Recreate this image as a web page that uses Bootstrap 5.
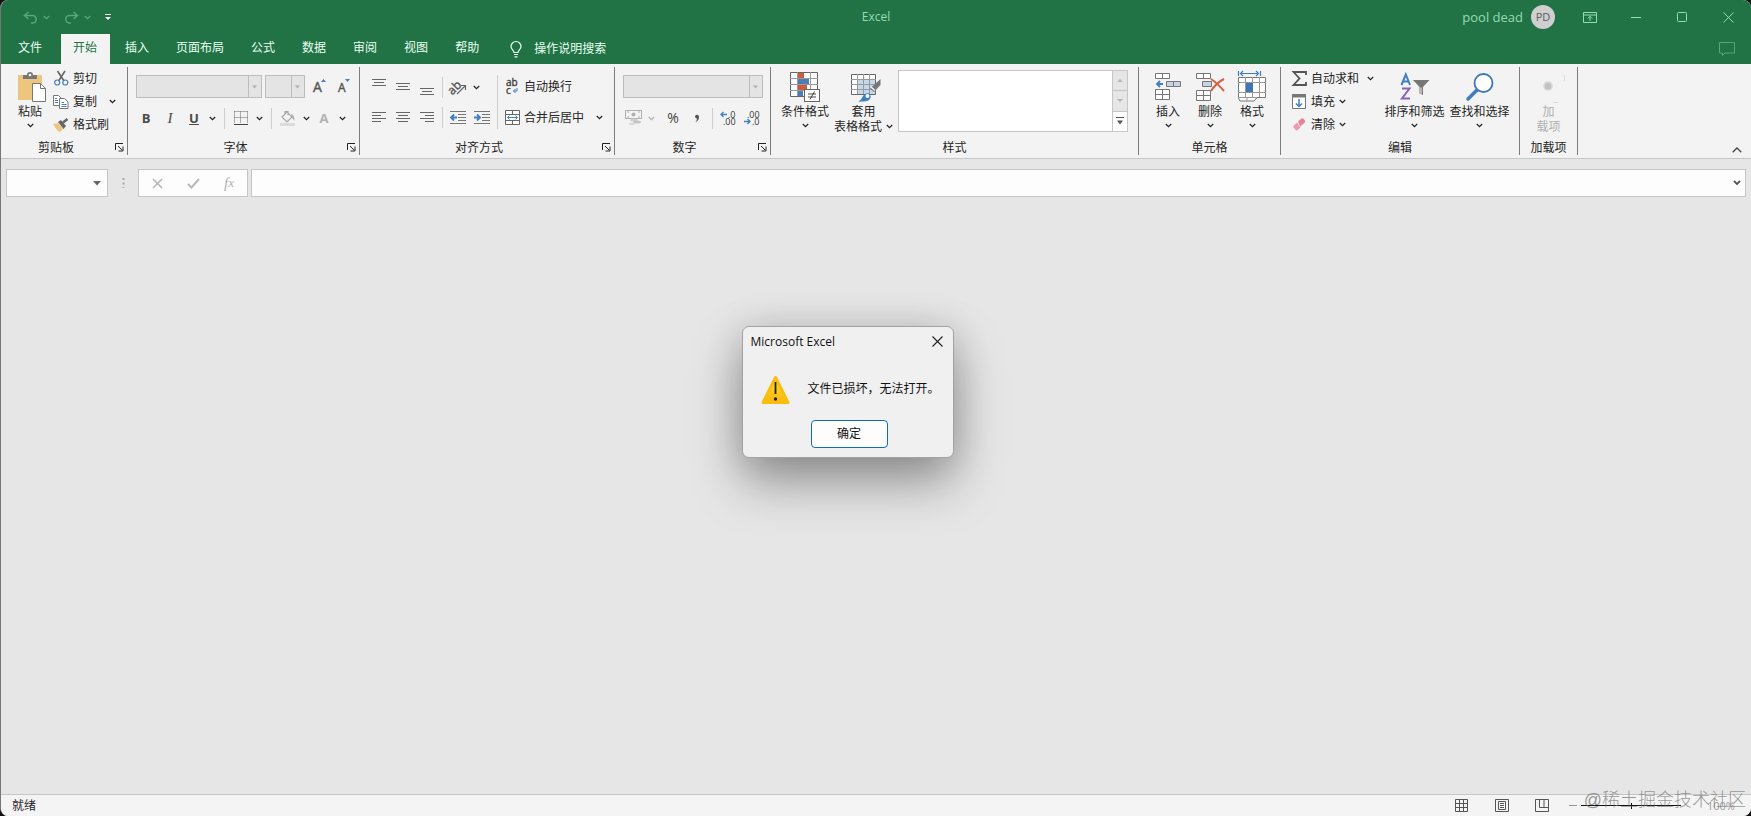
<!DOCTYPE html>
<html lang="zh-CN">
<head>
<meta charset="utf-8">
<meta name="viewport" content="width=device-width, initial-scale=1">
<title>Excel</title>
<link href="https://cdn.jsdelivr.net/npm/bootstrap@5.3.0/dist/css/bootstrap.min.css" rel="stylesheet">
<style>
:root{--xl-green:#217346;--xl-ribbon:#f3f3f3;--xl-sheet:#e6e6e6;--xl-line:#c6c6c6;}
html,body{height:100%;}
body{background:#111;font-family:"Open Sans","Noto Sans CJK SC",sans-serif;font-size:12px;line-height:16px;color:#262626;}
button,select,input{font:inherit;color:inherit;}
svg{display:block;flex:none;fill:none;overflow:visible;}
.app-window{background:var(--xl-sheet);border-left:1px solid #777;border-radius:8px;overflow:hidden;}
/* title bar */
.title-bar{background:var(--xl-green);height:34px;color:#94dcb2;}
.bar-side{flex:1 1 0;}
.plain-btn{border:0;background:none;padding:0;display:flex;align-items:center;justify-content:center;}
.faded{color:#5aa47b;}
.qat-btn{width:26px;}
.user-name{font-size:13px;}
.avatar{width:24px;height:24px;background:#cfcfcf;color:#5c5c5c;font-size:11px;margin-right:12px;}
.win-btn{width:46px;height:30px;}
/* tabs */
.tab-bar{background:var(--xl-green);height:30px;padding-left:5px;gap:3px;}
.tab-bar .tab-link{color:#eafff2;padding:6px 12px;text-decoration:none;height:30px;line-height:16px;white-space:nowrap;}
.tab-bar .tab-link.active{background:var(--xl-ribbon);color:var(--xl-green);padding-right:13px;}
/* ribbon */
.ribbon{background:var(--xl-ribbon);padding:3px 0;border-bottom:1px solid var(--xl-line);height:95px;overflow:hidden;}
.rb-group{border-right:1px solid #7d7d7d;flex:none;height:88px;}
.rb-body{height:73px;flex:none;}
.rb-label{height:15px;line-height:15px;flex:none;}
.launcher{width:16px;height:15px;}
.big-btn{flex-direction:column;justify-content:flex-start;padding-top:2px;line-height:15px;white-space:nowrap;}
.big-btn .ico{height:35px;display:flex;align-items:center;}
.big-btn .chev{margin-top:4px;}
.bw-s{width:42px}.bw-m{width:52px}.bw-l{width:65px}
.paste-btn{padding-left:6px;}
.row-btn{height:23px;gap:4px;white-space:nowrap;justify-content:flex-start;}
.row-btn .ico{width:16px;display:flex;justify-content:center;}
.sq{width:24px;height:24px;flex:none;}
.dd{width:12px;height:24px;flex:none;}
.sep{width:1px;height:21px;background:#cdcdcd;margin:0 4px 0 6px;flex:none;}
.sep-tight{margin:0 3px;}
.sep-long{height:54px;margin:0 6px 0 3px;}
.tool-row{height:24px;}
.combo-pad{padding:7px 0 0 8px;}
.row-two{margin-top:8px;}
.row-pull{margin-left:-2px;}
.align-pad{padding:4px 0 0 7px;}
.align-two{margin-top:6px;}
.edit-list{padding-left:10px;width:101px;}
.combo{appearance:none;height:23px;border:1px solid #bdbdbd;border-radius:0;opacity:1;margin-right:3px;
 background:#e4e4e4 url("data:image/svg+xml,%3Csvg xmlns='http://www.w3.org/2000/svg' width='13' height='21'%3E%3Cpath d='M.5 0v21' stroke='%23bdbdbd'/%3E%3Cpath d='M4 9.5h5l-2.5 3z' fill='%23b0b0b0'/%3E%3C/svg%3E") no-repeat right center;}
.w-font{width:126px}.w-size{width:40px}.w-num{width:140px}
.g-clip{width:127px}.g-font{width:232px}.g-align{width:255px}.g-num{width:156px}
.g-style{width:368px}.g-cells{width:142px}.g-edit{width:239px}.g-addin{width:58px}
.gallery{width:230px;height:62px;background:#fff;border:1px solid var(--xl-line);margin:3px 0 0 2px;}
.gallery-nav{width:15px;border-left:1px solid var(--xl-line);}
.gallery-nav button{flex:1;background:#e6e6e6;border-bottom:1px solid var(--xl-line);}
.gallery-nav button:last-child{background:#fff;border-bottom:0;}
.bold-ltr{font-weight:700;font-size:13px;color:#4a4a4a;}
.muted{color:#b1b1b1;}
.ital-ltr{font:italic 15px "Liberation Serif",serif;}
.pct{font-size:14px;color:#444;}
.collapse-btn{width:14px;height:10px;margin-right:7px;}
/* formula bar */
.formula-row{padding:10px 5px 0;height:38px;}
.f-box{height:28px;background:#fdfdfd;border:1px solid var(--xl-line);border-radius:0;}
.name-box{width:102px;padding-right:6px;}
.f-box input{border:0;background:none;outline:0;min-width:0;}
.f-tools{width:110px;margin-right:3px;}
.grip{width:30px;}
/* message box */
.dialog-area{padding:0 57px 202px 0;}
.dialog-box{width:212px;background:#f0f0f0;border-radius:7px;border:1px solid #a2a2a2;color:#111;
 box-shadow:0 24px 50px rgba(0,0,0,.36),0 0 38px rgba(0,0,0,.12);margin-bottom:6px;}
.dialog-head{height:30px;padding:0 9px 0 8px;}
.close-btn{width:12px;height:16px;}
.dialog-body{padding:14px 16px 0 18px;height:63px;gap:18px;}
.dialog-text{padding-top:10px;}
.ok-btn{width:77px;height:28px;border:1px solid #0f6cb8;border-radius:4px;background:#fdfdfd;margin:0 0 9px 68px;}
/* status bar */
.status-bar{height:22px;background:#f4f4f4;border-top:1px solid var(--xl-line);padding-left:11px;position:relative;}
.views{gap:26px;margin-right:20px;}
.zoom-range{appearance:none;width:100px;height:12px;margin:0 0 0 4px;background:linear-gradient(#111,#111) no-repeat center/100% 1px;}
.zoom-range::-webkit-slider-thumb{appearance:none;width:1px;height:6px;background:#111;}
.zoom-val{width:70px;padding-left:26px;color:#999;font-size:11px;}
.watermark{position:absolute;right:5px;bottom:3px;font:300 18px/26px "Liberation Sans","Noto Sans CJK SC",sans-serif;color:rgba(120,120,120,.75);pointer-events:none;}
</style>
</head>
<body>
<svg width="0" height="0" class="position-absolute" aria-hidden="true">
 <symbol id="chev" viewBox="0 0 7 5"><path d="M.8 1l2.700 2.600L6.200 1" stroke="currentColor" stroke-width="1.300" fill="none"/></symbol>
 <symbol id="launch" viewBox="0 0 9 9"><path d="M.5 7V.5H8M3 3l4 4M8 3.500V8H3.500" stroke="#222" fill="none"/></symbol>
</svg>
<div class="app-window d-flex flex-column min-vh-100">
 <header>
  <div class="title-bar d-flex align-items-center">
   <div class="bar-side d-flex align-items-center">
    <button class="plain-btn qat-btn faded ms-3" aria-label="撤消"><svg width="15" height="13"><path d="M5.500 1L1.500 4.500 5.500 8M2 4.500h7.500a3.700 3.700 0 0 1 0 7.500H8" stroke="currentColor" stroke-width="1.500"/></svg></button>
    <svg class="faded" width="7" height="5"><use href="#chev"/></svg>
    <button class="plain-btn qat-btn faded ms-2" aria-label="恢复"><svg width="15" height="13"><path d="M9.500 1l4 3.500-4 3.500M13 4.500H5.500a3.700 3.700 0 0 0 0 7.500H7" stroke="currentColor" stroke-width="1.500"/></svg></button>
    <svg class="faded" width="7" height="5"><use href="#chev"/></svg>
    <button class="plain-btn qat-btn ms-1" aria-label="自定义快速访问工具栏"><svg width="6" height="7"><path d="M0 .5h6" stroke="#fff"/><path d="M0 3h6L3 6z" fill="#fff"/></svg></button>
   </div>
   <div>Excel</div>
   <div class="bar-side d-flex align-items-center justify-content-end">
    <span class="user-name me-2">pool dead</span>
    <span class="avatar rounded-circle d-flex align-items-center justify-content-center">PD</span>
    <button class="plain-btn win-btn" aria-label="功能区显示选项"><svg width="14" height="11"><path d="M.5.500h13v10H.5zM.5 3h13M7 9V4.500M4.800 6.500L7 4.300l2.200 2.200" stroke="currentColor"/></svg></button>
    <button class="plain-btn win-btn" aria-label="最小化"><svg width="10" height="3"><path d="M0 1.500h10" stroke="currentColor"/></svg></button>
    <button class="plain-btn win-btn" aria-label="最大化"><svg width="10" height="10"><rect x=".5" y=".5" width="9" height="9" rx="1" stroke="currentColor"/></svg></button>
    <button class="plain-btn win-btn" aria-label="关闭"><svg width="11" height="11"><path d="M.5.500l10 10M10.500.500l-10 10" stroke="currentColor"/></svg></button>
   </div>
  </div>
  <nav class="tab-bar d-flex align-items-center">
   <a href="#" class="tab-link me-1">文件</a>
   <a href="#" class="tab-link active">开始</a>
   <a href="#" class="tab-link">插入</a>
   <a href="#" class="tab-link">页面布局</a>
   <a href="#" class="tab-link">公式</a>
   <a href="#" class="tab-link">数据</a>
   <a href="#" class="tab-link">审阅</a>
   <a href="#" class="tab-link">视图</a>
   <a href="#" class="tab-link">帮助</a>
   <a href="#" class="tab-link d-flex align-items-center gap-2"><svg class="ms-1 me-1" width="12" height="17"><path d="M4 11.500C4 9 1 8.500 1 5.500a5 5 0 0 1 10 0c0 3-3 3.500-3 6zM4 13.500h4M4.500 15.800h3" stroke="currentColor" stroke-width="1.200"/></svg>操作说明搜索</a>
   <button class="plain-btn ms-auto me-3" aria-label="批注"><svg width="16" height="15"><path d="M.5.500h15v10.500H6L3.500 13.500V11h-3z" stroke="#56a67b"/></svg></button>
  </nav>
 </header>

 <section class="ribbon d-flex" aria-label="功能区">
  <div class="rb-group g-clip d-flex flex-column">
   <div class="rb-body d-flex">
    <button class="plain-btn big-btn bw-m paste-btn"><span class="ico ps-1"><svg width="28" height="30"><rect x="0" y="3" width="24" height="25" fill="#ecc57e"/><path d="M5 7V3h4a3 3 0 0 1 6 0h4v4z" fill="#777"/><circle cx="12" cy="3" r="1.300" fill="#f3f3f3"/><path d="M14.500 11.500h8l5 5v13h-13z" fill="#fff" stroke="#777"/><path d="M22.500 11.500v5h5" stroke="#777"/></svg></span>粘贴<svg class="chev" width="7" height="5"><use href="#chev"/></svg></button>
    <div>
     <button class="plain-btn row-btn"><span class="ico"><svg width="15" height="15"><path d="M3.500 0l6.500 10M11 0L4.500 10" stroke="#666" stroke-width="1.600"/><circle cx="3.200" cy="11.500" r="2.500" stroke="#4a7ebb" stroke-width="1.200"/><circle cx="11.300" cy="11.500" r="2.500" stroke="#4a7ebb" stroke-width="1.200"/></svg></span>剪切</button>
     <button class="plain-btn row-btn"><span class="ico"><svg width="16" height="14"><path d="M.5.500h5l3 3v7H.5z" fill="#fff" stroke="#777"/><path d="M6.500 3.500h5l3.500 3.500v6.500H6.500z" fill="#fff" stroke="#777"/><path d="M2 3.500h2M2 5.500h3M2 7.500h3M8.500 7.500h2.500M8.500 9.500h5M8.500 11.500h5" stroke="#4a7ebb"/></svg></span>复制<svg class="ms-2" width="7" height="5"><use href="#chev"/></svg></button>
     <button class="plain-btn row-btn"><span class="ico"><svg width="16" height="14"><path d="M0 6l5-1 5 6-3 3q-3-1-4-3.500z" fill="#ecc57e"/><path d="M5 4l3-2 5 6-2.500 3z" fill="#666"/><path d="M10 4.500L14.500 1" stroke="#666" stroke-width="2.500"/></svg></span>格式刷</button>
    </div>
   </div>
   <div class="rb-label d-flex"><span class="flex-fill text-center">剪贴板</span><button class="plain-btn launcher" aria-label="剪贴板设置"><svg width="9" height="9"><use href="#launch"/></svg></button></div>
  </div>

  <div class="rb-group g-font d-flex flex-column">
   <div class="rb-body d-flex flex-column combo-pad">
    <div class="d-flex align-items-center tool-row"><select class="combo w-font" disabled aria-label="字体"></select><select class="combo w-size" disabled aria-label="字号"></select>
     <button class="plain-btn sq" aria-label="增大字号"><svg width="16" height="16"><text x="1" y="14" font-size="14" fill="#555" stroke="#555" stroke-width=".4">A</text><path d="M9 4l2.500-3L14 4z" fill="#4a7ebb"/></svg></button>
     <button class="plain-btn sq" aria-label="减小字号"><svg width="16" height="16"><text x="2" y="14" font-size="12" fill="#555" stroke="#555" stroke-width=".4">A</text><path d="M9 1h5l-2.500 3z" fill="#4a7ebb"/></svg></button></div>
    <div class="tool-row row-two row-pull d-flex align-items-center">
     <button class="plain-btn sq bold-ltr">B</button><button class="plain-btn sq bold-ltr ital-ltr">I</button><button class="plain-btn sq bold-ltr text-decoration-underline">U</button><button class="plain-btn dd" aria-label="下划线选项"><svg width="7" height="5"><use href="#chev"/></svg></button>
     <span class="sep"></span>
     <button class="plain-btn sq" aria-label="边框"><svg width="14" height="14"><path d="M.5.500h13M.5.500v12M13.500.500v12M6.500.500v12M.5 6.500h13" stroke="#666" stroke-dasharray="1 1"/><path d="M0 13.500h14" stroke="#444"/></svg></button><button class="plain-btn dd" aria-label="边框选项"><svg width="7" height="5"><use href="#chev"/></svg></button>
     <span class="sep"></span>
     <button class="plain-btn sq" aria-label="填充颜色"><svg width="16" height="16"><path d="M2 7l5-5 5 5-5 5zM5 4V1.500h3V5" stroke="#a8a8a8" stroke-width="1.200"/><path d="M11 4q4 1 3.500 7l-3-4z" fill="#b0b0b0"/><path d="M0 13h15v3H0z" fill="#dcdcdc"/></svg></button><button class="plain-btn dd" aria-label="填充选项"><svg width="7" height="5"><use href="#chev"/></svg></button>
     <button class="plain-btn sq bold-ltr muted">A</button><button class="plain-btn dd" aria-label="字体颜色选项"><svg width="7" height="5"><use href="#chev"/></svg></button>
    </div>
   </div>
   <div class="rb-label d-flex"><span class="flex-fill text-center">字体</span><button class="plain-btn launcher" aria-label="字体设置"><svg width="9" height="9"><use href="#launch"/></svg></button></div>
  </div>

  <div class="rb-group g-align d-flex flex-column">
   <div class="rb-body d-flex align-pad">
    <div>
     <div class="tool-row d-flex align-items-center mt-1">
      <button class="plain-btn sq" aria-label="顶端对齐"><svg width="14" height="18"><path d="M0 1.500h14M2 4.500h10M0 7.500h14" stroke="#666"/></svg></button><button class="plain-btn sq" aria-label="垂直居中"><svg width="14" height="18"><path d="M0 5.500h14M2 8.500h10M0 11.500h14" stroke="#666"/></svg></button><button class="plain-btn sq" aria-label="底端对齐"><svg width="14" height="18"><path d="M0 10.500h14M2 13.500h10M0 16.500h14" stroke="#666"/></svg></button>
      <span class="sep sep-tight"></span>
      <button class="plain-btn sq" aria-label="方向"><svg width="17" height="16"><text x="-3" y="12" font-size="12" fill="#555" stroke="#555" stroke-width=".4" transform="rotate(-45 5 8)">ab</text><path d="M7 15l8-8M11 6.500h4.500V11" stroke="#666" stroke-width="1.200"/></svg></button><button class="plain-btn dd" aria-label="方向选项"><svg width="7" height="5"><use href="#chev"/></svg></button>
     </div>
     <div class="tool-row align-two d-flex align-items-center">
      <button class="plain-btn sq" aria-label="左对齐"><svg width="14" height="11"><path d="M0 .5h14M0 3.500h9M0 6.500h14M0 9.500h9" stroke="#666"/></svg></button><button class="plain-btn sq" aria-label="居中"><svg width="14" height="11"><path d="M0 .5h14M2 3.500h10M0 6.500h14M2 9.500h10" stroke="#666"/></svg></button><button class="plain-btn sq" aria-label="右对齐"><svg width="14" height="11"><path d="M0 .5h14M5 3.500h9M0 6.500h14M5 9.500h9" stroke="#666"/></svg></button>
      <span class="sep sep-tight"></span>
      <button class="plain-btn sq" aria-label="减少缩进"><svg width="16" height="13"><path d="M0 .5h16M8 3.500h8M8 6.500h8M8 9.500h8M0 12.500h16" stroke="#777"/><path d="M7 6.500H1M4 3.500l-3 3 3 3" stroke="#3f7fc0" stroke-width="1.800"/></svg></button><button class="plain-btn sq" aria-label="增加缩进"><svg width="16" height="13"><path d="M0 .5h16M8 3.500h8M8 6.500h8M8 9.500h8M0 12.500h16" stroke="#777"/><path d="M0 6.500h6M3 3.500l3 3-3 3" stroke="#3f7fc0" stroke-width="1.800"/></svg></button>
     </div>
    </div>
    <span class="sep sep-long mt-1"></span>
    <div>
     <button class="plain-btn row-btn mt-1"><span class="ico"><svg width="14" height="16"><text x="1" y="7" font-size="10" fill="#444" stroke="#444" stroke-width=".4">ab</text><text x="1" y="15" font-size="10" fill="#444" stroke="#444" stroke-width=".4">c</text><path d="M12 9v3H8.500M10.500 10l-2 2 2 2" stroke="#3f7fc0"/></svg></span>自动换行</button>
     <button class="plain-btn row-btn row-two"><span class="ico"><svg width="15" height="15"><path d="M.5.500h14v14H.5zM.5 4.500h14M.5 10.500h14M7.500 0v4M7.500 11v4" fill="#fff" stroke="#666"/><path d="M2.500 7.500h10M4.500 5.500l-2 2 2 2M10.500 5.500l2 2-2 2" stroke="#3f7fc0"/></svg></span>合并后居中<svg class="ms-2" width="7" height="5"><use href="#chev"/></svg></button>
    </div>
   </div>
   <div class="rb-label d-flex"><span class="flex-fill text-center">对齐方式</span><button class="plain-btn launcher" aria-label="对齐设置"><svg width="9" height="9"><use href="#launch"/></svg></button></div>
  </div>

  <div class="rb-group g-num d-flex flex-column">
   <div class="rb-body d-flex flex-column combo-pad">
    <div class="d-flex align-items-center tool-row"><select class="combo w-num" disabled aria-label="数字格式"></select></div>
    <div class="tool-row row-two row-pull d-flex align-items-center">
     <button class="plain-btn sq" aria-label="会计数字格式"><svg width="17" height="16"><rect x=".5" y=".5" width="16" height="8" stroke="#b0b0b0"/><circle cx="8.500" cy="4.500" r="2" fill="#b0b0b0"/><path d="M2 2h2M13 2h2M2 7h2M13 7h2" stroke="#b0b0b0"/><ellipse cx="9" cy="10" rx="4" ry="1.500" fill="#d0d0d0"/><ellipse cx="12" cy="12" rx="4" ry="1.500" fill="#c4c4c4"/><ellipse cx="7" cy="14" rx="3" ry="1.300" fill="#dadada"/></svg></button><button class="plain-btn dd muted" aria-label="会计格式选项"><svg width="7" height="5"><use href="#chev"/></svg></button>
     <button class="plain-btn sq ms-1 pct">%</button><button class="plain-btn sq" aria-label="千位分隔样式"><svg width="6" height="9"><path d="M1 2.500a2 2 0 1 1 4 .5Q5 6.500 1.500 8 3 6 3 4.500A2 2 0 0 1 1 2.500z" fill="#555"/></svg></button>
     <span class="sep sep-tight"></span>
     <button class="plain-btn sq" aria-label="增加小数位数"><svg width="16" height="15"><path d="M7 3.500H1M3.500 1L1 3.500 3.500 6" stroke="#3f7fc0" stroke-width="1.300"/><text x="8" y="7" font-size="9" fill="#333">.0</text><text x="3" y="14" font-size="9" fill="#333">.00</text></svg></button><button class="plain-btn sq" aria-label="减少小数位数"><svg width="16" height="15"><path d="M0 10.500h6M3.500 8L6 10.500 3.500 13" stroke="#3f7fc0" stroke-width="1.300"/><text x="3" y="7" font-size="9" fill="#333">.00</text><text x="8" y="14" font-size="9" fill="#333">.0</text></svg></button>
    </div>
   </div>
   <div class="rb-label d-flex"><span class="flex-fill text-center">数字</span><button class="plain-btn launcher" aria-label="数字设置"><svg width="9" height="9"><use href="#launch"/></svg></button></div>
  </div>

  <div class="rb-group g-style d-flex flex-column">
   <div class="rb-body d-flex ps-2">
    <button class="plain-btn big-btn bw-m"><span class="ico"><svg width="30" height="30"><path d="M.5.500h27v24H.5z" fill="#fff" stroke="#666"/><path d="M0 6.500h28M0 12.500h28M0 18.500h28M7.500 0v24M20.500 0v24" stroke="#999"/><path d="M8 1h6v5H8zM8 13h9v5H8z" fill="#d2593c"/><path d="M8 7h11v5H8zM8 19h5v5H8z" fill="#4a7ebb"/><rect x="14.500" y="17.500" width="15" height="12" fill="#fff" stroke="#666"/><path d="M18 22h8M18 25h8M24.500 19.500l-4.500 8" stroke="#444"/></svg></span>条件格式<svg class="chev" width="7" height="5"><use href="#chev"/></svg></button>
    <button class="plain-btn big-btn bw-l"><span class="ico ps-1"><svg width="30" height="30"><path d="M.5 2.500h24v20H.5z" fill="#fff" stroke="#666"/><path d="M7 8h17v14H7z" fill="#c5d7ea"/><path d="M0 7.500h25M0 12.500h25M0 17.500h25M6.500 2v20M12.500 2v20M18.500 2v20" stroke="#999"/><path d="M29.500 7v6l-6.500 7-4-3.500z" fill="#777"/><path d="M20 15l4 3.500" stroke="#f3f3f3" stroke-width="1.500"/><path d="M7 29.500q3-1 5-5.500 2-3.500 6-2.500 3.500 3 0 6.500-3 2-11 1.500z" fill="#3f7fc0"/><circle cx="16.500" cy="24" r="2" fill="#fff"/></svg></span>套用<span class="d-flex align-items-center gap-1">表格格式<svg width="7" height="5"><use href="#chev"/></svg></span></button>
    <div class="gallery d-flex">
     <div class="flex-fill"></div>
     <div class="gallery-nav d-flex flex-column">
      <button class="plain-btn" aria-label="上一行"><svg width="6" height="3"><path d="M0 3h6L3 0z" fill="#b5b5b5"/></svg></button>
      <button class="plain-btn" aria-label="下一行"><svg width="6" height="3"><path d="M0 0h6L3 3z" fill="#b5b5b5"/></svg></button>
      <button class="plain-btn" aria-label="其他"><svg width="8" height="8"><path d="M0 .5h8" stroke="#555"/><path d="M1 3.500h6l-3 4z" fill="#555"/></svg></button>
     </div>
    </div>
   </div>
   <div class="rb-label text-center">样式</div>
  </div>

  <div class="rb-group g-cells d-flex flex-column">
   <div class="rb-body d-flex ps-2">
    <button class="plain-btn big-btn bw-s"><span class="ico"><svg width="27" height="28"><path d="M.5.500h14v5H.5zM7.500.500v5M.5 16.500h14v10H.5zM7.500 16.500v10M.5 21.500h14" fill="#fff" stroke="#777"/><path d="M11.500 8.500h14v5h-14zM18.500 8.500v5" fill="#c8d3e3" stroke="#777"/><path d="M8 11H2M5 8l-3 3 3 3" stroke="#3f7fc0" stroke-width="1.800"/></svg></span>插入<svg class="chev" width="7" height="5"><use href="#chev"/></svg></button>
    <button class="plain-btn big-btn bw-s"><span class="ico"><svg width="29" height="28"><path d="M.5.500h14v5H.5zM7.500.500v5M.5 17.500h14v10H.5zM7.500 17.500v10M.5 22.500h14" fill="#fff" stroke="#777"/><path d="M6.500 8.500h9v5h-9z" fill="#c8d3e3" stroke="#777"/><path d="M15 6q6 4 13 12M28 6q-8 4-13 12" stroke="#d9603f" stroke-width="2"/></svg></span>删除<svg class="chev" width="7" height="5"><use href="#chev"/></svg></button>
    <button class="plain-btn big-btn bw-s"><span class="ico"><svg width="28" height="31"><path d="M.5 0v5M22.500 0v5M2 2.500h19M5 0L2.500 2.500 5 5M18 0l2.500 2.500L18 5" stroke="#3f7fc0" stroke-width="1.200"/><path d="M.5 6.500h27v20H19l-3 3.500H2l-1.500-3z" fill="#fff" stroke="#777"/><path d="M0 11.500h28M0 21.500h28M7.500 6v20M14.500 6v20M21.500 6v20M0 26.500h19M9 30v-3" stroke="#999"/><path d="M8 12h7v9H8z" fill="#3f76b5"/></svg></span>格式<svg class="chev" width="7" height="5"><use href="#chev"/></svg></button>
   </div>
   <div class="rb-label text-center">单元格</div>
  </div>

  <div class="rb-group g-edit d-flex flex-column">
   <div class="rb-body d-flex">
    <div class="edit-list">
     <button class="plain-btn row-btn"><span class="ico"><svg width="15" height="15"><path d="M14 4V1H1.500l6 6.500-6 6.500H14v-3" stroke="#555" stroke-width="1.800"/></svg></span>自动求和<svg class="ms-1" width="7" height="5"><use href="#chev"/></svg></button>
     <button class="plain-btn row-btn"><span class="ico"><svg width="14" height="15"><path d="M.5.500h13v14H.5z" fill="#fff" stroke="#777"/><path d="M0 0h14v3.500H0z" fill="#777"/><path d="M7 5v7.500M4 9.500l3 3 3-3" stroke="#3f7fc0" stroke-width="1.500"/></svg></span>填充<svg width="7" height="5"><use href="#chev"/></svg></button>
     <button class="plain-btn row-btn"><span class="ico"><svg width="14" height="13"><path d="M6 3.500l3.500-3q1-.5 2 .3l1.500 2q.5 1-.3 1.700l-4.500 4z" fill="#e8819a"/><path d="M5 4.500l3.500 5-3 2.500q-1 .7-2-.3L1.500 9.500q-.6-1 .2-1.800z" fill="#f09ab0"/></svg></span>清除<svg width="7" height="5"><use href="#chev"/></svg></button>
    </div>
    <button class="plain-btn big-btn bw-l"><span class="ico"><svg width="30" height="30"><path d="M1.500 13L5.800 2.500 10 13M3 9.500h5.500" stroke="#3f7fc0" stroke-width="2"/><path d="M2 16.500h7.500L2 26.500h8" stroke="#8a63b8" stroke-width="2"/><path d="M13 8h16.500L23 15v8l-3.500-1.500V15z" fill="#777"/><path d="M20.500 15.500v6l1 .5v-6.500z" fill="#fff"/></svg></span>排序和筛选<svg class="chev" width="7" height="5"><use href="#chev"/></svg></button>
    <button class="plain-btn big-btn bw-l"><span class="ico"><svg width="28" height="28"><path d="M11 17L2 26" stroke="#3f7fc0" stroke-width="3.500" stroke-linecap="round"/><circle cx="17.500" cy="10" r="9" fill="#fff" stroke="#3f76b5" stroke-width="1.800"/></svg></span>查找和选择<svg class="chev" width="7" height="5"><use href="#chev"/></svg></button>
   </div>
   <div class="rb-label text-center">编辑</div>
  </div>

  <div class="rb-group g-addin d-flex flex-column">
   <div class="rb-body d-flex justify-content-center">
    <button class="plain-btn big-btn muted" disabled><span class="ico"><svg width="34" height="34"><circle cx="16" cy="16" r="5" fill="#dedede"/><circle cx="16" cy="16" r="3.500" fill="#c2c2c2"/><path d="M32.500 5v6M21 32.500h5" stroke="#dcdcdc"/></svg></span>加<span>载项</span></button>
   </div>
   <div class="rb-label text-center">加载项</div>
  </div>
  <button class="plain-btn collapse-btn ms-auto align-self-end" aria-label="折叠功能区"><svg width="10" height="6"><path d="M.7 5.300L5 1l4.300 4.300" stroke="#444" stroke-width="1.300"/></svg></button>
 </section>

 <main class="flex-fill d-flex flex-column">
  <div class="formula-row d-flex">
   <div class="f-box name-box d-flex align-items-center"><input class="flex-fill w-100" aria-label="名称框"><svg width="8" height="5"><path d="M0 0h8L4 4.500z" fill="#666"/></svg></div>
   <span class="grip d-flex justify-content-center align-items-center"><svg width="3" height="12"><path d="M1.500 1v10" stroke="#aaa" stroke-width="2" stroke-dasharray="2 2.500"/></svg></span>
   <div class="f-box f-tools d-flex justify-content-around align-items-center">
    <button class="plain-btn sq" aria-label="取消"><svg width="11" height="11"><path d="M1 1l9 9M10 1L1 10" stroke="#b8b8b8" stroke-width="1.700"/></svg></button>
    <button class="plain-btn sq" aria-label="输入"><svg width="13" height="11"><path d="M1 6l3.500 3.500L12 1" stroke="#b8b8b8" stroke-width="2"/></svg></button>
    <button class="plain-btn sq ital-ltr muted">f<small>x</small></button>
   </div>
   <div class="f-box flex-fill d-flex align-items-center pe-1"><input class="flex-fill" aria-label="编辑栏"><svg width="8" height="6"><path d="M1 1l3 3 3-3" stroke="#555" stroke-width="1.800"/></svg></div>
  </div>
  <div class="dialog-area flex-fill d-flex align-items-center justify-content-center">
   <div class="dialog-box" role="alertdialog" aria-labelledby="dlg-title" aria-describedby="dlg-text">
    <div class="dialog-head d-flex align-items-center justify-content-between"><span id="dlg-title">Microsoft Excel</span><button class="plain-btn close-btn" aria-label="关闭"><svg width="11" height="11"><path d="M.5.500l10 10M10.500.500l-10 10" stroke="#222" stroke-width="1.100"/></svg></button></div>
    <div class="dialog-body d-flex"><svg class="mt-1" width="29" height="30"><defs><linearGradient id="warn" x2="0" y2="1"><stop stop-color="#ffe02e"/><stop offset="1" stop-color="#fdb60c"/></linearGradient></defs><path d="M14.500 2.500L27 27.500H2z" fill="url(#warn)" stroke="#f8bd0e" stroke-width="3" stroke-linejoin="round"/><path d="M14.500 7v12" stroke="#222" stroke-width="1.800"/><circle cx="14.500" cy="24" r="1.700" fill="#222"/></svg><span id="dlg-text" class="dialog-text text-nowrap">文件已损坏，无法打开。</span></div>
    <button class="ok-btn d-block">确定</button>
   </div>
  </div>
 </main>

 <footer class="status-bar d-flex align-items-center">
  <span class="me-auto">就绪</span>
  <div class="views d-flex">
   <button class="plain-btn" aria-label="普通"><svg width="14" height="13"><path d="M.5.500h12v12H.5zM.5 4.500h12M.5 8.500h12M4.500.500v12M8.500.500v12" stroke="#555"/></svg></button>
   <button class="plain-btn" aria-label="页面布局"><svg width="14" height="13"><path d="M.5.500h13v12H.5zM3.500 2.500h7v8h-7zM5 4.500h4M5 6.500h4M5 8.500h4" stroke="#555"/></svg></button>
   <button class="plain-btn" aria-label="分页预览"><svg width="14" height="13"><path d="M.5.500h13v12H.5zM4.500.500v8h9M9 .5v8" stroke="#555"/></svg></button>
  </div>
  <button class="plain-btn" aria-label="缩小"><svg width="8" height="3"><path d="M0 1.500h8" stroke="#999"/></svg></button>
  <input type="range" class="zoom-range" aria-label="显示比例">
  <span class="zoom-val">100%</span>
  <span class="watermark">@稀土掘金技术社区</span>
 </footer>
</div>
<script src="https://cdn.jsdelivr.net/npm/bootstrap@5.3.0/dist/js/bootstrap.bundle.min.js"></script>
</body>
</html>
